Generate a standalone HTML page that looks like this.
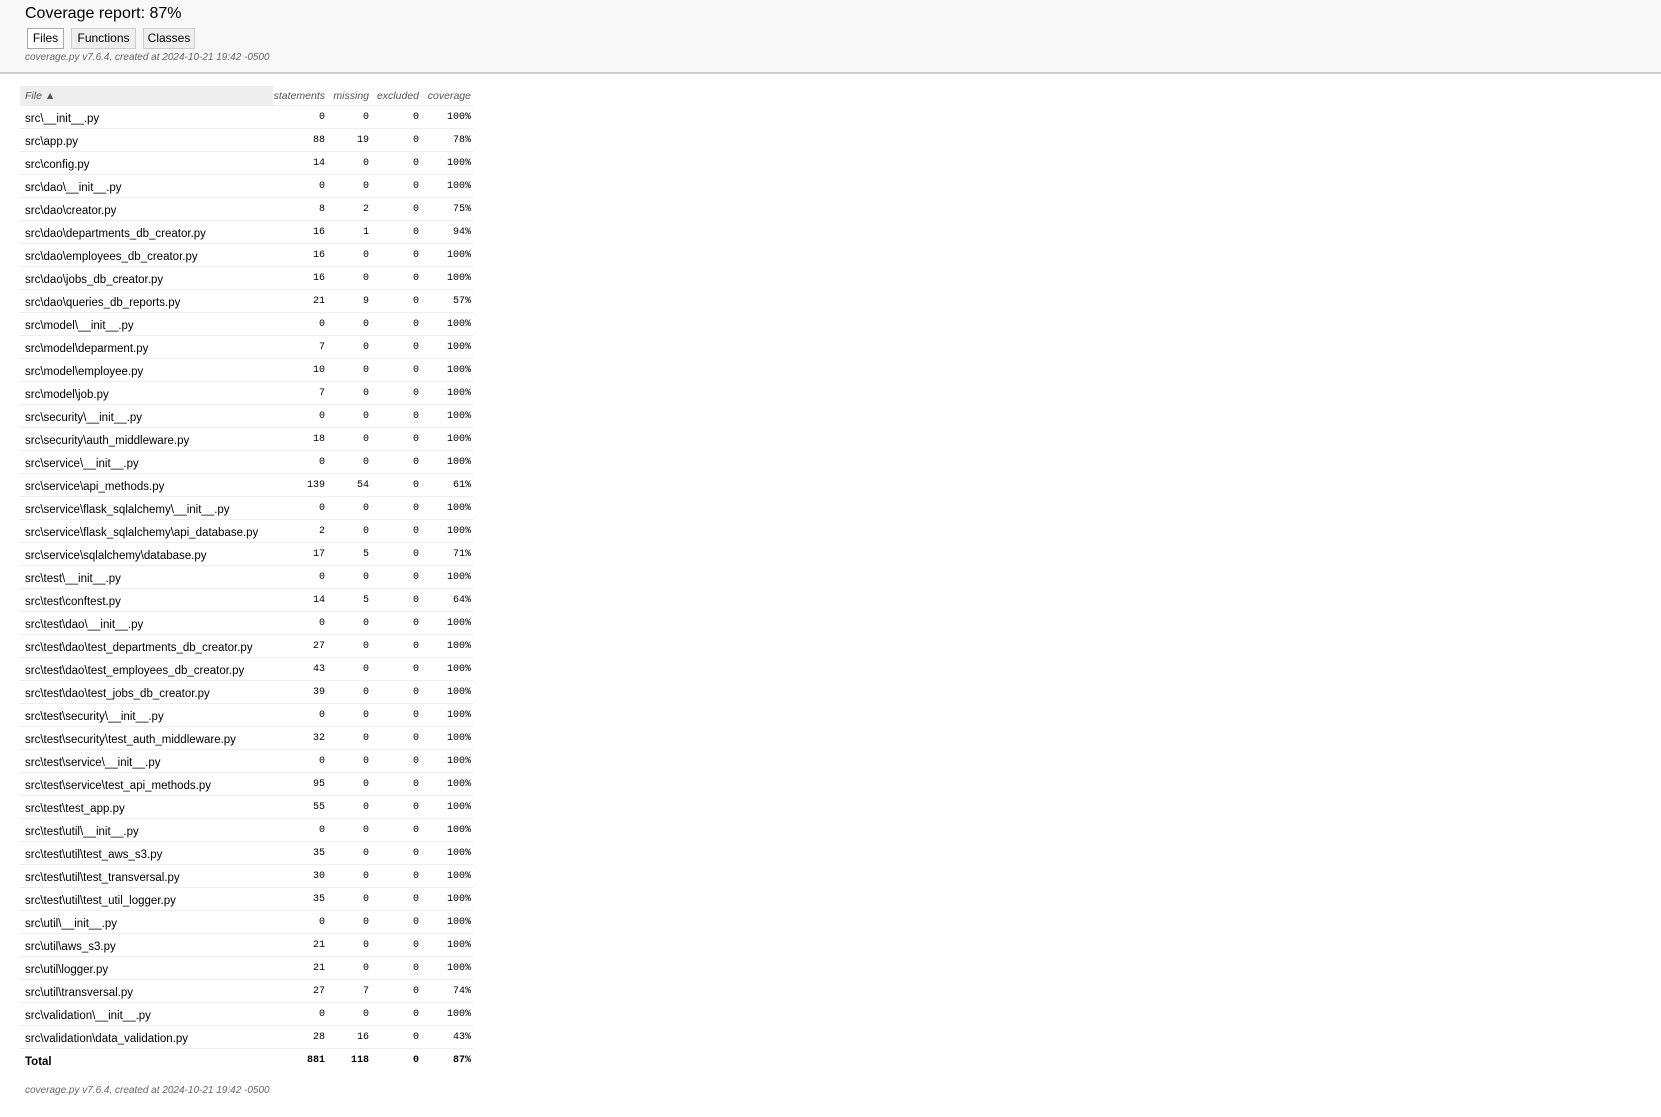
<!DOCTYPE html>
<html><head><meta charset="utf-8"><style>
body{margin:0;width:1661px;height:1117px;background:#fff;font-family:"DejaVu Sans","Liberation Sans",sans-serif;color:#000;position:relative;overflow:hidden}
#hd{position:absolute;left:0;top:0;width:1661px;height:72px;background:#f8f8f8;border-bottom:2px solid #d0d0d0}
h1{position:absolute;left:25px;top:5px;margin:0;font-weight:normal;font-family:"Liberation Sans",sans-serif;font-size:16px}
.btn{position:absolute;top:28px;border:1px solid #ccc;background:#eee;line-height:19px;text-align:center;box-sizing:border-box;height:21px;font-family:"Liberation Sans",sans-serif;font-size:12px}
.meta{position:absolute;left:25px;font-size:10px;font-style:italic;color:#666;font-family:"Liberation Sans",sans-serif}
table{position:absolute;left:20px;top:86px;border-collapse:collapse;font-family:"Liberation Sans",sans-serif}
th{height:19px;font-weight:normal;font-style:italic;font-size:10.5px;color:#555;text-align:right;padding:0 3px 0 0;white-space:nowrap}
th.f{background:#eee;text-align:left;padding-left:5px;width:245px}
td{height:23px;border-top:1px solid #eee;padding:0 3px 0 0;font-family:"Liberation Mono","DejaVu Sans Mono",monospace;font-size:10px;text-align:right;vertical-align:top;padding-top:6px;box-sizing:border-box}
td.f{font-family:"Liberation Sans",sans-serif;font-size:11.5px;text-align:left;padding-left:5px;padding-top:7px}
tr.t td{font-weight:bold}
</style></head><body>
<div id="hd">
<h1>Coverage report: 87%</h1>
<div class="btn" style="left:27px;width:37px;background:#fff;border-color:#aaa">Files</div>
<div class="btn" style="left:71px;width:65px">Functions</div>
<div class="btn" style="left:143px;width:52px">Classes</div>
<div class="meta" style="top:52px">coverage.py v7.6.4, created at 2024-10-21 19:42 -0500</div>
</div>
<table>
<tr><th class="f">File ▲</th><th style="width:52px">statements</th><th style="width:41px">missing</th><th style="width:47px">excluded</th><th style="width:49px">coverage</th></tr>
<tr><td class="f">src\__init__.py</td><td>0</td><td>0</td><td>0</td><td>100%</td></tr>
<tr><td class="f">src\app.py</td><td>88</td><td>19</td><td>0</td><td>78%</td></tr>
<tr><td class="f">src\config.py</td><td>14</td><td>0</td><td>0</td><td>100%</td></tr>
<tr><td class="f">src\dao\__init__.py</td><td>0</td><td>0</td><td>0</td><td>100%</td></tr>
<tr><td class="f">src\dao\creator.py</td><td>8</td><td>2</td><td>0</td><td>75%</td></tr>
<tr><td class="f">src\dao\departments_db_creator.py</td><td>16</td><td>1</td><td>0</td><td>94%</td></tr>
<tr><td class="f">src\dao\employees_db_creator.py</td><td>16</td><td>0</td><td>0</td><td>100%</td></tr>
<tr><td class="f">src\dao\jobs_db_creator.py</td><td>16</td><td>0</td><td>0</td><td>100%</td></tr>
<tr><td class="f">src\dao\queries_db_reports.py</td><td>21</td><td>9</td><td>0</td><td>57%</td></tr>
<tr><td class="f">src\model\__init__.py</td><td>0</td><td>0</td><td>0</td><td>100%</td></tr>
<tr><td class="f">src\model\deparment.py</td><td>7</td><td>0</td><td>0</td><td>100%</td></tr>
<tr><td class="f">src\model\employee.py</td><td>10</td><td>0</td><td>0</td><td>100%</td></tr>
<tr><td class="f">src\model\job.py</td><td>7</td><td>0</td><td>0</td><td>100%</td></tr>
<tr><td class="f">src\security\__init__.py</td><td>0</td><td>0</td><td>0</td><td>100%</td></tr>
<tr><td class="f">src\security\auth_middleware.py</td><td>18</td><td>0</td><td>0</td><td>100%</td></tr>
<tr><td class="f">src\service\__init__.py</td><td>0</td><td>0</td><td>0</td><td>100%</td></tr>
<tr><td class="f">src\service\api_methods.py</td><td>139</td><td>54</td><td>0</td><td>61%</td></tr>
<tr><td class="f">src\service\flask_sqlalchemy\__init__.py</td><td>0</td><td>0</td><td>0</td><td>100%</td></tr>
<tr><td class="f">src\service\flask_sqlalchemy\api_database.py</td><td>2</td><td>0</td><td>0</td><td>100%</td></tr>
<tr><td class="f">src\service\sqlalchemy\database.py</td><td>17</td><td>5</td><td>0</td><td>71%</td></tr>
<tr><td class="f">src\test\__init__.py</td><td>0</td><td>0</td><td>0</td><td>100%</td></tr>
<tr><td class="f">src\test\conftest.py</td><td>14</td><td>5</td><td>0</td><td>64%</td></tr>
<tr><td class="f">src\test\dao\__init__.py</td><td>0</td><td>0</td><td>0</td><td>100%</td></tr>
<tr><td class="f">src\test\dao\test_departments_db_creator.py</td><td>27</td><td>0</td><td>0</td><td>100%</td></tr>
<tr><td class="f">src\test\dao\test_employees_db_creator.py</td><td>43</td><td>0</td><td>0</td><td>100%</td></tr>
<tr><td class="f">src\test\dao\test_jobs_db_creator.py</td><td>39</td><td>0</td><td>0</td><td>100%</td></tr>
<tr><td class="f">src\test\security\__init__.py</td><td>0</td><td>0</td><td>0</td><td>100%</td></tr>
<tr><td class="f">src\test\security\test_auth_middleware.py</td><td>32</td><td>0</td><td>0</td><td>100%</td></tr>
<tr><td class="f">src\test\service\__init__.py</td><td>0</td><td>0</td><td>0</td><td>100%</td></tr>
<tr><td class="f">src\test\service\test_api_methods.py</td><td>95</td><td>0</td><td>0</td><td>100%</td></tr>
<tr><td class="f">src\test\test_app.py</td><td>55</td><td>0</td><td>0</td><td>100%</td></tr>
<tr><td class="f">src\test\util\__init__.py</td><td>0</td><td>0</td><td>0</td><td>100%</td></tr>
<tr><td class="f">src\test\util\test_aws_s3.py</td><td>35</td><td>0</td><td>0</td><td>100%</td></tr>
<tr><td class="f">src\test\util\test_transversal.py</td><td>30</td><td>0</td><td>0</td><td>100%</td></tr>
<tr><td class="f">src\test\util\test_util_logger.py</td><td>35</td><td>0</td><td>0</td><td>100%</td></tr>
<tr><td class="f">src\util\__init__.py</td><td>0</td><td>0</td><td>0</td><td>100%</td></tr>
<tr><td class="f">src\util\aws_s3.py</td><td>21</td><td>0</td><td>0</td><td>100%</td></tr>
<tr><td class="f">src\util\logger.py</td><td>21</td><td>0</td><td>0</td><td>100%</td></tr>
<tr><td class="f">src\util\transversal.py</td><td>27</td><td>7</td><td>0</td><td>74%</td></tr>
<tr><td class="f">src\validation\__init__.py</td><td>0</td><td>0</td><td>0</td><td>100%</td></tr>
<tr><td class="f">src\validation\data_validation.py</td><td>28</td><td>16</td><td>0</td><td>43%</td></tr>
<tr class="t"><td class="f">Total</td><td>881</td><td>118</td><td>0</td><td>87%</td></tr>
</table>
<div class="meta" style="top:1085px">coverage.py v7.6.4, created at 2024-10-21 19:42 -0500</div>
</body></html>
